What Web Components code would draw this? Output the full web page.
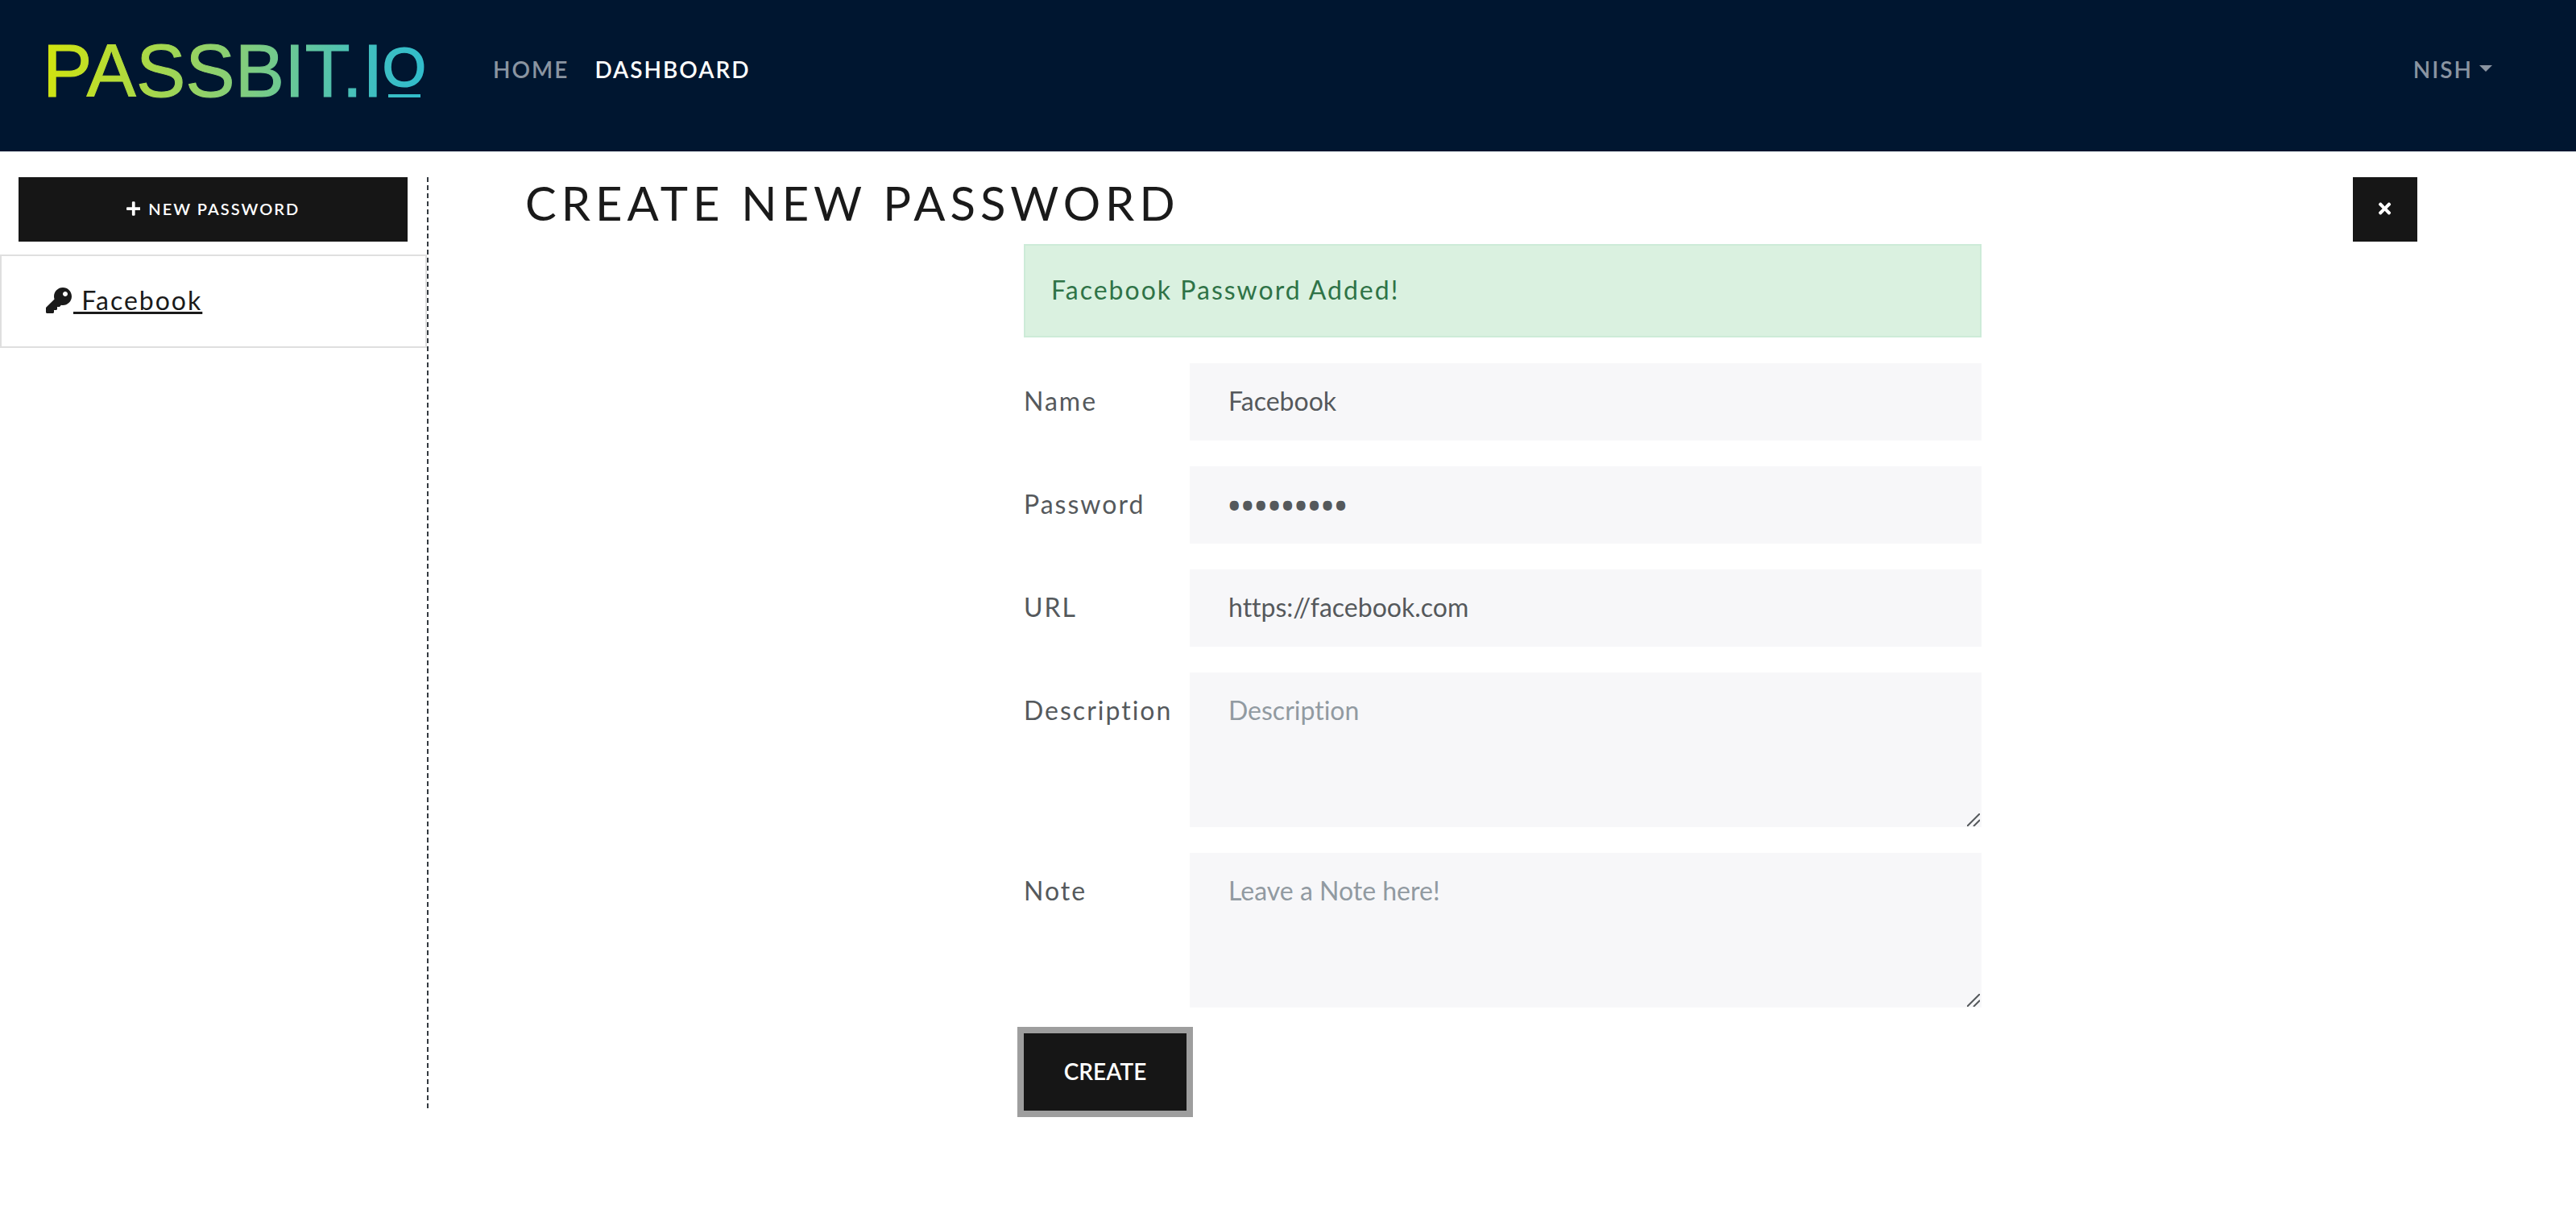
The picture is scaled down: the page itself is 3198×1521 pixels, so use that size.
<!DOCTYPE html>
<html lang="en">
<head>
<meta charset="utf-8">
<meta name="viewport" content="width=device-width, initial-scale=1">
<title>Passbit.io - Dashboard</title>
<style>
  :root {
    --ink: #1a1a1a;
    --button: #161616;
    --text: #55595c;
    --field: #f7f7f9;
    --muted: #919aa1;
    --navy: #001630;
  }
  body {
    margin: 0;
    background: #fff;
    color: var(--text);
    font: 400 32px/48px Lato, "Open Sans", sans-serif;
    font-variant-ligatures: none;
    letter-spacing: 2px;
  }
</style>
</head>
<body>
<pb-app></pb-app>
<script>
const define = (name, html, setup) => {
  const template = document.createElement('template');
  template.innerHTML = '<style>*{box-sizing:border-box}</style>' + html;
  customElements.define(name, class extends HTMLElement {
    constructor() {
      super();
      this.attachShadow({ mode: 'open' }).append(template.content.cloneNode(true));
    }
    connectedCallback() {
      if (setup) setup(this, this.shadowRoot);
    }
  });
};

define('pb-logo', `
  <style>
    :host { display: block; }
    svg { display: block; }
    text { font-family: "Liberation Sans", Arial, sans-serif; letter-spacing: 0; stroke: url(#brand); stroke-width: 1; }
    .small { stroke-width: 2; }
  </style>
  <svg width="492" height="128" viewBox="0 0 492 128" fill="url(#brand)" role="img" aria-label="PASSBIT.IO">
    <defs>
      <linearGradient id="brand" gradientUnits="userSpaceOnUse" x1="10" y1="20" x2="480" y2="80">
        <stop offset="0" stop-color="#d2e40e"/>
        <stop offset=".5" stop-color="#86ce78"/>
        <stop offset=".85" stop-color="#40bfc0"/>
        <stop offset="1" stop-color="#30bccc"/>
      </linearGradient>
    </defs>
    <text x="5" y="96" font-size="92">PASSBIT.I</text>
    <text class="small" x="427" y="83" font-size="69">O</text>
    <rect x="434" y="93" width="40" height="4"/>
  </svg>`);

define('pb-nav-link', `
  <style>
    :host { display: block; }
    a { display: block; padding: 16px; color: #8a94a1; text-decoration: none; font-weight: 600; font-size: 28px; line-height: 44px; text-transform: uppercase; }
    :host([active]) a { color: #fff; }
    .caret { display: none; width: 0; height: 0; margin-left: 8px; border: 8px solid transparent; border-top-color: currentColor; border-bottom: 0; vertical-align: 8px; }
    :host([menu]) .caret { display: inline-block; }
  </style>
  <a href="#"><slot></slot><span class="caret"></span></a>`);

define('pb-navbar', `
  <style>
    :host { display: block; background: var(--navy); }
    nav { display: flex; align-items: center; padding: 24px 88px 36px 48px; }
    pb-logo { margin-right: 56px; }
    .links { display: flex; flex: 1; }
    pb-nav-link { margin-bottom: 4px; }
  </style>
  <nav>
    <pb-logo></pb-logo>
    <div class="links">
      <pb-nav-link>Home</pb-nav-link>
      <pb-nav-link active>Dashboard</pb-nav-link>
    </div>
    <pb-nav-link menu>Nish</pb-nav-link>
  </nav>`);

const ICONS = {
  plus: ['0 0 448 512', 'M416 208H272V64c0-17.670-14.330-32-32-32h-32c-17.670 0-32 14.330-32 32v144H32c-17.670 0-32 14.330-32 32v32c0 17.670 14.330 32 32 32h144v144c0 17.670 14.330 32 32 32h32c17.670 0 32-14.330 32-32V304h144c17.670 0 32-14.330 32-32v-32c0-17.670-14.330-32-32-32z'],
  times: ['0 0 352 512', 'M242.720 256l100.070-100.070c12.280-12.280 12.280-32.190 0-44.480l-22.240-22.240c-12.280-12.280-32.190-12.280-44.480 0L176 189.280 75.930 89.210c-12.280-12.280-32.190-12.280-44.480 0L9.210 111.450c-12.280 12.280-12.280 32.190 0 44.480L109.280 256 9.210 356.070c-12.280 12.280-12.280 32.190 0 44.480l22.240 22.240c12.280 12.280 32.200 12.280 44.480 0L176 322.720l100.070 100.070c12.280 12.280 32.200 12.280 44.480 0l22.240-22.240c12.280-12.280 12.280-32.190 0-44.480L242.720 256z'],
  key: ['0 0 512 512', 'M512 176.001C512 273.203 433.202 352 336 352c-11.220 0-22.190-1.062-32.827-3.069l-24.012 27.014A23.999 23.999 0 0 1 261.223 384H224v40c0 13.255-10.745 24-24 24h-40v40c0 13.255-10.745 24-24 24H24c-13.255 0-24-10.745-24-24v-78.059c0-6.365 2.529-12.470 7.029-16.971l161.802-161.802C163.108 213.814 160 195.271 160 176 160 78.798 238.797.001 335.999 0 433.488-.001 512 78.511 512 176.001zM336 128c0 26.510 21.490 48 48 48s48-21.490 48-48-21.490-48-48-48-48 21.490-48 48z']
};
define('pb-icon', `
  <style>
    :host { display: inline-block; }
    svg { display: block; height: 1em; fill: currentColor; }
  </style>
  <svg aria-hidden="true"><path/></svg>`, (el, root) => {
  const [box, d] = ICONS[el.getAttribute('name')];
  const [, , w, h] = box.split(' ');
  const svg = root.querySelector('svg');
  svg.setAttribute('viewBox', box);
  svg.style.aspectRatio = w + ' / ' + h;
  root.querySelector('path').setAttribute('d', d);
});

define('pb-button', `
  <style>
    :host { display: inline-block; vertical-align: top; }
    button { display: flex; align-items: center; justify-content: center; gap: 8px; width: 100%; min-width: 202px; height: 96px; padding: 0 48px 2px; border: 0; background: var(--button); color: #fff; font: 600 28px/42px Lato, "Open Sans", sans-serif; text-transform: uppercase; white-space: nowrap; }
    :host([small]) button { min-width: 80px; height: 80px; padding: 0 32px 2px; font-size: 20px; line-height: 30px; letter-spacing: 2px; }
    :host([square]) button { padding: 0 0 2px; font-size: 22px; }
    :host([focused]) button { box-shadow: 0 0 0 8px #9e9e9e; }
  </style>
  <button type="button"><slot></slot></button>`, (el, root) => {
  if (el.hasAttribute('label')) root.querySelector('button').setAttribute('aria-label', el.getAttribute('label'));
});

define('pb-sidebar', `
  <style>
    :host { display: block; margin-right: 1px; padding-right: 2px; background: repeating-linear-gradient(#343a40 0 6px, transparent 6px 10px) right / 2px 100% no-repeat; }
    pb-button { display: block; margin: 0 24px 16px 23px; }
    ul { list-style: none; margin: 0; padding: 0; }
    li { padding: 31px 55px 33px; border: 2px solid #dfdfdf; }
    a { display: flex; align-items: center; color: var(--ink); text-decoration: underline; text-decoration-thickness: 3px; }
    pb-icon { margin-right: 2px; }
    span { white-space: pre; }
  </style>
  <pb-button small><pb-icon name="plus"></pb-icon>New Password</pb-button>
  <ul>
    <li><a href="#"><pb-icon name="key"></pb-icon><span> Facebook</span></a></li>
  </ul>`);

define('pb-alert', `
  <style>
    :host { display: block; padding: 31px 32px 33px; border: 2px solid #cdebd8; background: #daf1e0; color: #2f7347; line-height: 48px; }
  </style>
  <div role="status"><slot></slot></div>`);

define('pb-field', `
  <style>
    :host { display: grid; grid-template-columns: 206px 1fr; align-items: start; }
    label { padding: 23px 0 25px; line-height: 48px; }
    .box { position: relative; display: flex; }
    input, textarea { display: block; width: 100%; height: 96px; margin: 0; padding: 23px 48px 25px; border: 0; border-radius: 0; outline: 0; background: var(--field); color: var(--text); font: 400 32px/48px Lato, "Open Sans", sans-serif; font-variant-ligatures: none; letter-spacing: 0; }
    input { padding: 22px 48px 26px; }
    input[type=password] { padding: 24px 47px; font-family: "Open Sans", sans-serif; font-size: 44px; -webkit-text-stroke: 2px currentColor; }
    textarea { height: 192px; resize: vertical; }
    textarea::-webkit-resizer { background: transparent; }
    ::placeholder { color: var(--muted); opacity: 1; }
    .grip { position: absolute; right: 2px; bottom: 1px; width: 16px; height: 16px; stroke: #55595c; stroke-width: 2; pointer-events: none; }
  </style>
  <label for="control"></label>
  <div class="box"></div>`, (el, root) => {
  root.querySelector('label').textContent = el.getAttribute('label');
  const box = root.querySelector('.box');
  if (box.firstChild) return;
  const type = el.getAttribute('type') || 'text';
  const control = document.createElement(type === 'textarea' ? 'textarea' : 'input');
  control.id = 'control';
  if (type !== 'textarea') control.type = type;
  control.placeholder = el.getAttribute('placeholder') || '';
  control.value = el.getAttribute('value') || '';
  box.append(control);
  if (type === 'textarea') {
    box.insertAdjacentHTML('beforeend', '<svg class="grip" viewBox="0 0 16 16" aria-hidden="true"><path d="M0 16L16 0M8 16L16 8"/></svg>');
  }
});

define('pb-password-form', `
  <style>
    :host { display: block; }
    header { display: flex; justify-content: space-between; align-items: flex-start; height: 83px; padding: 0 197px 0 119px; }
    h1 { margin: 0; color: var(--ink); font-size: 58px; font-weight: 400; line-height: 64px; letter-spacing: 6px; text-transform: uppercase; }
    form { display: grid; gap: 32px; width: 50%; max-width: 1189px; margin: 0 auto; }
  </style>
  <header>
    <h1>Create New Password</h1>
    <pb-button small square label="Close"><pb-icon name="times"></pb-icon></pb-button>
  </header>
  <form>
    <pb-alert>Facebook Password Added!</pb-alert>
    <pb-field label="Name" value="Facebook"></pb-field>
    <pb-field label="Password" type="password" value="passw0rd!"></pb-field>
    <pb-field label="URL" type="url" value="https://facebook.com"></pb-field>
    <pb-field label="Description" type="textarea" placeholder="Description"></pb-field>
    <pb-field label="Note" type="textarea" placeholder="Leave a Note here!"></pb-field>
    <div><pb-button focused>Create</pb-button></div>
  </form>`);

define('pb-app', `
  <style>
    :host { display: block; min-height: 100vh; }
    main { display: grid; grid-template-columns: 1fr 5fr; padding-top: 32px; }
  </style>
  <pb-navbar></pb-navbar>
  <main>
    <pb-sidebar></pb-sidebar>
    <pb-password-form></pb-password-form>
  </main>`);
</script>
</body>
</html>
